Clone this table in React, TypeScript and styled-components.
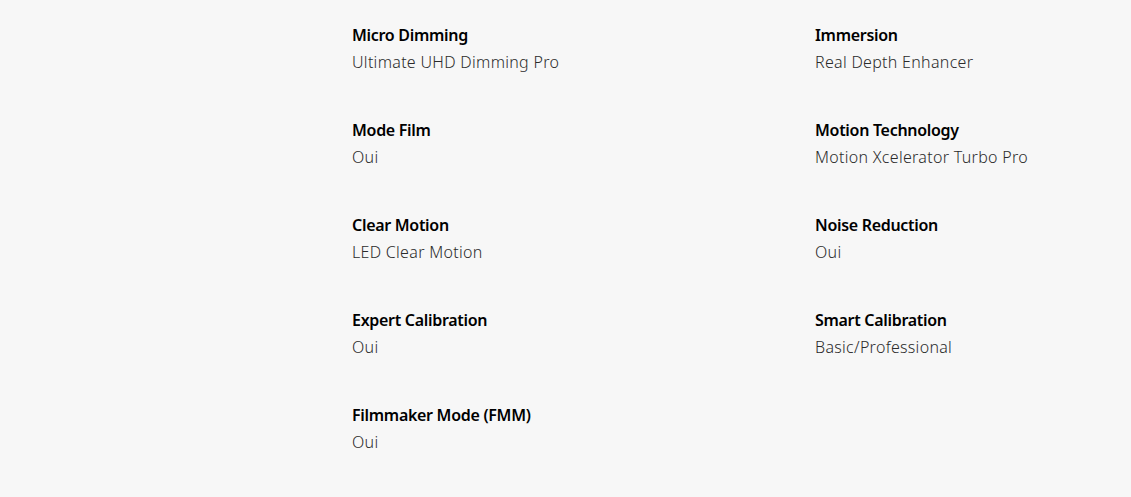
import styled, { createGlobalStyle } from 'styled-components';

const GlobalStyle = createGlobalStyle`
  html, body {
    margin: 0;
    padding: 0;
    background: #f7f7f7;
    overflow: hidden;
  }
`;

const SpecSection = styled.section`
  width: 100%;
  min-height: 497px;
  box-sizing: border-box;
  padding: 23px 0 0 352px;
  background: #f7f7f7;
  font-family: 'Noto Sans', 'Open Sans', sans-serif;
`;

const SpecGrid = styled.dl`
  display: grid;
  grid-template-columns: 463px 1fr;
  row-gap: 44px;
  margin: 0;
`;

const SpecItem = styled.div`
  display: flex;
  flex-direction: column;
  gap: 3px;
`;

const SpecName = styled.dt`
  font-size: 16px;
  line-height: 24px;
  font-weight: 600;
  letter-spacing: -0.3px;
  color: #000;
`;

const SpecValue = styled.dd`
  margin: 0;
  font-size: 16px;
  line-height: 24px;
  font-weight: 300;
  letter-spacing: 0.3px;
  color: #2b2b2b;
`;

const specs = [
  { name: 'Micro Dimming', value: 'Ultimate UHD Dimming Pro' },
  { name: 'Immersion', value: 'Real Depth Enhancer' },
  { name: 'Mode Film', value: 'Oui' },
  { name: 'Motion Technology', value: 'Motion Xcelerator Turbo Pro' },
  { name: 'Clear Motion', value: 'LED Clear Motion' },
  { name: 'Noise Reduction', value: 'Oui' },
  { name: 'Expert Calibration', value: 'Oui' },
  { name: 'Smart Calibration', value: 'Basic/Professional' },
  { name: 'Filmmaker Mode (FMM)', value: 'Oui' },
];

export default function App() {
  return (
    <>
      <GlobalStyle />
      <SpecSection>
        <SpecGrid>
          {specs.map((spec) => (
            <SpecItem key={spec.name}>
              <SpecName>{spec.name}</SpecName>
              <SpecValue>{spec.value}</SpecValue>
            </SpecItem>
          ))}
        </SpecGrid>
      </SpecSection>
    </>
  );
}
